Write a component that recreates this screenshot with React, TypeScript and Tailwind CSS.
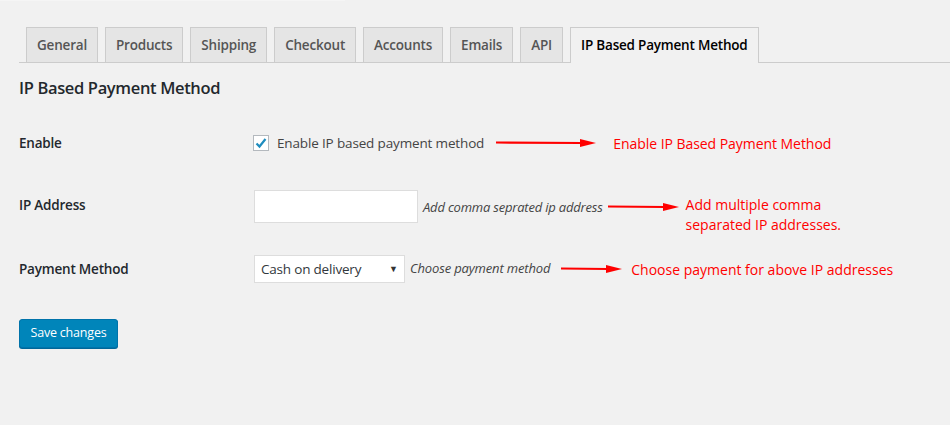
import React from "react";

const tabs = ["General", "Products", "Shipping", "Checkout", "Accounts", "Emails", "API"];

function Arrow({ width }: { width: number }) {
  return (
    <svg width={width} height="10" viewBox={`0 0 ${width} 10`} className="block">
      <path d={`M0 4.5 L${width - 14} 5 `} stroke="#ff0000" strokeWidth="2.2" fill="none" />
      <path d={`M${width - 16} 1 L${width} 5 L${width - 16} 9 Z`} fill="#ff0000" />
    </svg>
  );
}

export default function App() {
  return (
    <div
      className="w-[950px] h-[425px] bg-[#f1f1f1] overflow-hidden text-[#444]"
      style={{ fontFamily: '"Open Sans", "Noto Sans", sans-serif' }}
    >
      <div className="h-[1px] w-[345px] bg-[#f5f5f5]" />
      <div className="pl-[19px] pt-[26px]">
        {/* Tabs */}
        <div className="flex items-end border-b border-[#cccccc] h-[36px]">
          {tabs.map((t) => (
            <div
              key={t}
              className="ml-[7px] h-[35px] px-[10px] flex items-center border border-b-0 border-[#cccccc] bg-[#e5e5e5] text-[#555] text-[13.5px] font-semibold tracking-[-0.2px]"
            >
              {t}
            </div>
          ))}
          <div className="ml-[7px] h-[36px] -mb-[1px] px-[10px] flex items-center border border-b-0 border-[#cccccc] bg-[#f1f1f1] text-[#000] text-[13.5px] font-semibold tracking-[-0.2px]">
            IP Based Payment Method
          </div>
        </div>

        <h2 className="mt-[14px] text-[16.5px] font-semibold text-[#23282d] leading-[22px] tracking-[-0.35px]">
          IP Based Payment Method
        </h2>

        {/* Enable row */}
        <div className="flex items-center mt-[34px] h-[20px]">
          <div className="w-[234px] text-[13.5px] font-semibold text-[#23282d] tracking-[-0.2px]">Enable</div>
          <div className="w-[16px] h-[16px] border border-[#b4b9be] bg-white flex items-center justify-center">
            <svg width="14" height="14" viewBox="0 0 14 14">
              <path d="M2.5 7.5 L5.5 10.5 L11.5 3" stroke="#1e8cbe" strokeWidth="2.2" fill="none" />
            </svg>
          </div>
          <span className="ml-[8px] text-[13.5px] text-[#444] tracking-[-0.15px]">Enable IP based payment method</span>
          <div className="ml-[12px]">
            <Arrow width={100} />
          </div>
          <span className="ml-[17px] text-[14px] text-[#ff0000] tracking-[-0.05px]">Enable IP Based Payment Method</span>
        </div>

        {/* IP Address row */}
        <div className="flex items-start mt-[37px]">
          <div className="w-[235px] mt-[5px] text-[13.5px] font-semibold text-[#23282d] tracking-[-0.2px]">IP Address</div>
          <div className="w-[164px] h-[33px] border border-[#dddddd] bg-white" />
          <span className="ml-[5px] mt-[8px] text-[13px] italic text-[#444] tracking-[-0.2px]">Add comma seprated ip address</span>
          <div className="ml-[5px] mt-[12px]">
            <Arrow width={71} />
          </div>
          <div className="ml-[7px] mt-[5px] text-[14px] leading-[19.5px] text-[#ff0000] tracking-[0px]">
            Add multiple comma
            <br />
            separated IP addresses.
          </div>
        </div>

        {/* Payment method row */}
        <div className="flex items-center mt-[21px] h-[28px]">
          <div className="w-[235px] text-[13.5px] font-semibold text-[#23282d] tracking-[-0.2px]">Payment Method</div>
          <div className="w-[151px] h-[28px] border border-[#dddddd] bg-white flex items-center justify-between pl-[6px] pr-[6px]">
            <span className="text-[13.5px] text-[#32373c] tracking-[-0.2px]">Cash on delivery</span>
            <span className="text-[9px] text-[#333]">▼</span>
          </div>
          <span className="ml-[5px] text-[13px] italic text-[#444] tracking-[-0.15px]">Choose payment method</span>
          <div className="ml-[11px]">
            <Arrow width={61} />
          </div>
          <span className="ml-[9px] text-[14px] text-[#ff0000] tracking-[0px]">Choose payment for above IP addresses</span>
        </div>

        {/* Save */}
        <button className="mt-[36px] w-[99px] h-[29px] bg-[#0085ba] border border-[#0073aa] rounded-[3px] shadow-[0_1px_0_#006799] text-white text-[12.5px] tracking-[-0.2px] flex items-center justify-center">
          Save changes
        </button>
      </div>
    </div>
  );
}
